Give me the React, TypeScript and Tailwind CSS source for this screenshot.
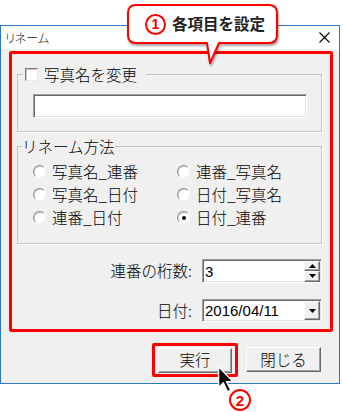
import React from "react";

const JP = "font-['Noto_Sans_CJK_JP',sans-serif]";

// raised 3D edge used by classic Windows buttons
const RAISED =
  "bg-[#f0f0f0] border border-t-white border-l-white border-b-[#696969] border-r-[#696969] shadow-[inset_-1px_-1px_0_#a0a0a0]";
// sunken edge used by edit boxes
const SUNKEN =
  "bg-white border border-t-[#a0a0a0] border-l-[#a0a0a0] border-b-white border-r-white shadow-[inset_1px_1px_0_#696969,inset_-1px_-1px_0_#e3e3e3]";

function Radio({ label, checked }: { label: string; checked?: boolean }) {
  return (
    <div className="flex items-center gap-[6px] h-[23px]">
      <div className="w-[13px] h-[13px] rounded-full bg-white border border-t-[#8c8c8c] border-l-[#8c8c8c] border-b-[#f4f4f4] border-r-[#f4f4f4] flex items-center justify-center shadow-[inset_1px_1px_0_#d4d4d4]">
        {checked && <div className="w-[4px] h-[4px] rounded-full bg-black" />}
      </div>
      <span className="leading-[23px]">{label}</span>
    </div>
  );
}

function Tri({ up }: { up?: boolean }) {
  return (
    <svg width="7" height="4" viewBox="0 0 7 4" aria-hidden="true">
      <path d={up ? "M3.5 0 L7 4 L0 4 Z" : "M0 0 L7 0 L3.5 4 Z"} fill="#000" />
    </svg>
  );
}

function Callout() {
  return (
    <div className="absolute left-[127px] top-[4px] w-[152px] h-[62px]">
      <svg
        width="152"
        height="62"
        viewBox="0 0 152 62"
        className="absolute inset-0 drop-shadow-[1px_2px_1px_rgba(0,0,0,0.35)]"
        aria-hidden="true"
      >
        <path
          d="M9 1 H142 Q150 1 150 9 V31 Q150 39 142 39 H92 L83 59 L80 39 H9 Q1 39 1 31 V9 Q1 1 9 1 Z"
          fill="#fff"
          stroke="#ff0000"
          strokeWidth="2"
          strokeLinejoin="round"
        />
      </svg>
      <div className="relative flex items-center h-[40px] pl-[18px] gap-[6px]">
        <span className="w-[21px] h-[21px] rounded-full border-2 border-[#ff0000] text-[#ff0000] flex items-center justify-center text-[14px] font-bold font-['Liberation_Sans',sans-serif] leading-none">
          1
        </span>
        <span className={`${JP} text-[15.5px] font-bold text-[#222] leading-none`}>各項目を設定</span>
      </div>
    </div>
  );
}

export default function App() {
  return (
    <div className={`relative w-[343px] h-[412px] bg-white overflow-hidden ${JP} font-light text-black`}>
      <div className="pt-[25px]">
        <div className="w-[340px] border border-[#2b78c0] bg-[#f0f0f0]">
          {/* title bar */}
          <div className="h-[23px] bg-white flex items-center justify-between pl-[4px] pr-[9px]">
            <span className="text-[12px] leading-none [font-feature-settings:'palt'] text-[#111]">リネーム</span>
            <svg width="11" height="11" viewBox="0 0 11 11" aria-hidden="true">
              <path d="M0.5 0.5 L10.5 10.5 M10.5 0.5 L0.5 10.5" stroke="#000" strokeWidth="1.1" />
            </svg>
          </div>

          {/* body */}
          <div className="pt-[2px] pb-[6px]">
            <div className="ml-[8px] w-[324px] border-[3px] border-[#ff0000] rounded-[2px] pl-[5px] pr-[8px] pt-[10px] pb-[7px] text-[15.5px]">
              <fieldset className="border border-[#c4c4c4] shadow-[1px_1px_0_#fff]">
                <legend className="ml-[5px] pl-[2px] pr-[9px] h-[20px] flex items-center gap-[6px]">
                  <span className="w-[13px] h-[13px] bg-white border border-t-[#7a7a7a] border-l-[#7a7a7a] border-b-[#e8e8e8] border-r-[#e8e8e8] shadow-[inset_1px_1px_0_#c8c8c8]" />
                  <span className="leading-[20px]">写真名を変更</span>
                </legend>
                <div className="pl-[15px] pt-[10px] pb-[13px]">
                  <div className={`w-[274px] h-[24px] ${SUNKEN}`} />
                </div>
              </fieldset>

              <fieldset className="mt-[4px] border border-[#c4c4c4] shadow-[1px_1px_0_#fff]">
                <legend className="ml-[4px] h-[20px] leading-[20px]">リネーム方法</legend>
                <div className="grid grid-cols-[144px_1fr] pl-[15px] pt-[4px] pb-[14px]">
                  <Radio label="写真名_連番" />
                  <Radio label="連番_写真名" />
                  <Radio label="写真名_日付" />
                  <Radio label="日付_写真名" />
                  <Radio label="連番_日付" />
                  <Radio label="日付_連番" checked />
                </div>
              </fieldset>

              <div className="mt-[15px] flex items-center justify-end gap-[10px]">
                <span>連番の桁数:</span>
                <div className={`w-[120px] h-[24px] ${SUNKEN} flex items-center pl-[2px] pr-[1px]`}>
                  <span className="flex-1 font-['Liberation_Sans',sans-serif] font-normal text-[15px] leading-none">3</span>
                  <div className="flex flex-col w-[16px] h-[21px]">
                    <div className={`flex-1 ${RAISED} flex items-center justify-center`}>
                      <Tri up />
                    </div>
                    <div className={`flex-1 ${RAISED} flex items-center justify-center`}>
                      <Tri />
                    </div>
                  </div>
                </div>
              </div>

              <div className="mt-[16px] flex items-center justify-end gap-[10px]">
                <span>日付:</span>
                <div className={`w-[120px] h-[23px] ${SUNKEN} flex items-center pl-[2px] pr-[1px]`}>
                  <span className="flex-1 font-['Liberation_Sans',sans-serif] font-normal text-[15px] leading-none">2016/04/11</span>
                  <div className={`w-[16px] h-[19px] ${RAISED} flex items-center justify-center`}>
                    <Tri />
                  </div>
                </div>
              </div>
            </div>

            {/* buttons */}
            <div className="mt-[11px] flex justify-end items-center gap-[8px] pr-[18px]">
              <div className="border-[3px] border-[#ff0000] rounded-[2px] px-[3px] py-[1px]">
                <button className={`w-[74px] h-[25px] ${RAISED} text-[15.5px] leading-none`}>実行</button>
              </div>
              <button className={`w-[75px] h-[25px] ${RAISED} text-[15.5px] leading-none`}>閉じる</button>
            </div>
          </div>
        </div>
      </div>

      <Callout />

      {/* mouse cursor */}
      <svg
        className="absolute left-[217px] top-[365px]"
        width="18"
        height="29"
        viewBox="0 0 17 27"
        aria-hidden="true"
      >
        <path
          d="M1.5 1.5 L1.5 21 L6 16.5 L10 25 L13 23.5 L9 15.5 L15 15.5 Z"
          fill="#000"
          stroke="#fff"
          strokeWidth="1.3"
          strokeLinejoin="round"
        />
      </svg>

      {/* step 2 marker */}
      <span className="absolute left-[229px] top-[389px] w-[22px] h-[22px] rounded-full border-2 border-[#ff0000] bg-white text-[#ff0000] flex items-center justify-center text-[15px] font-bold font-['Liberation_Sans',sans-serif] leading-none">
        2
      </span>
    </div>
  );
}
